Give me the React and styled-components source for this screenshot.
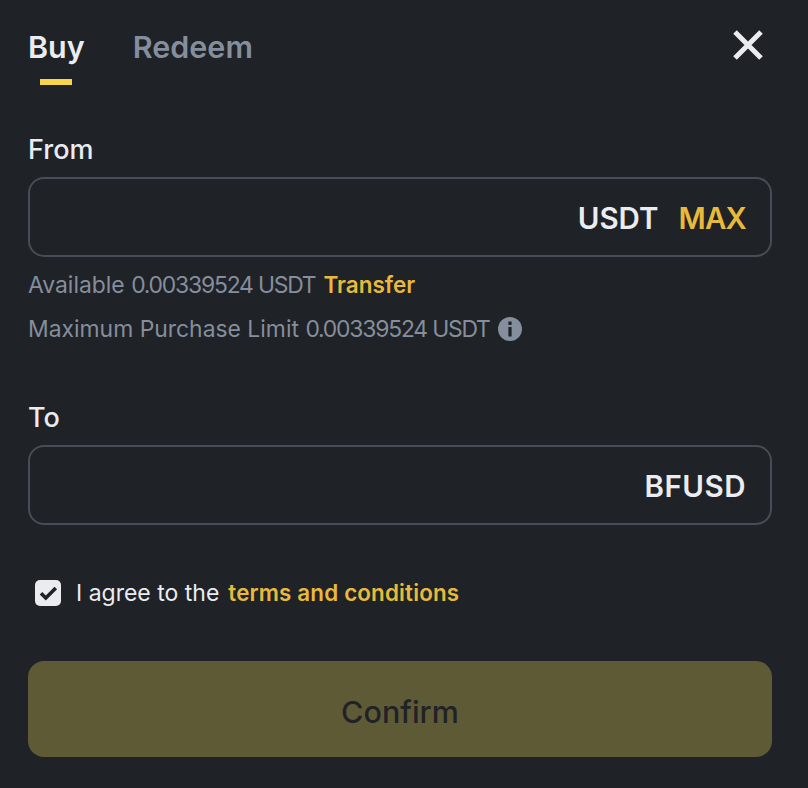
import React from "react";
import styled, { createGlobalStyle } from "styled-components";

const GlobalStyle = createGlobalStyle`
  html, body {
    margin: 0;
    background: #1f2227;
  }
  * {
    box-sizing: border-box;
  }
`;

const Panel = styled.div`
  width: 808px;
  height: 788px;
  padding: 0 36px 0 28px;
  background: #1f2227;
  font-family: "Inter", "Liberation Sans", sans-serif;
  overflow: hidden;
`;

const Header = styled.div`
  display: flex;
  justify-content: space-between;
  align-items: flex-start;
  height: 85px;
  padding-top: 26px;
`;

const Tabs = styled.div`
  display: flex;
  gap: 48px;
`;

const Tab = styled.div`
  position: relative;
  height: 59px;
  font-size: 30.5px;
  line-height: 42px;
  font-weight: 600;
  color: ${(p) => (p.$active ? "#eaecef" : "#848e9c")};
  &::after {
    content: "";
    display: ${(p) => (p.$active ? "block" : "none")};
    position: absolute;
    left: 12px;
    bottom: 0;
    width: 32px;
    height: 6px;
    background: #f8d44c;
  }
`;

const CloseIcon = styled.svg`
  display: block;
  width: 32px;
  height: 32px;
  margin-top: 3px;
  margin-right: 8px;
`;

const Label = styled.div`
  margin-top: ${(p) => p.$top}px;
  height: 32px;
  font-size: 27px;
  line-height: 32px;
  font-weight: 500;
  color: #eaecef;
`;

const Field = styled.div`
  display: flex;
  justify-content: flex-end;
  align-items: center;
  gap: 20px;
  width: 744px;
  height: 80px;
  margin-top: 11px;
  padding: 2px 24px 0;
  border: 2px solid #474d57;
  border-radius: 16px;
  font-size: 29.5px;
  font-weight: 600;
  color: #eaecef;
`;

const Unit = styled.span`
  letter-spacing: ${(p) => p.$spacing || 0}px;
`;

const Max = styled.span`
  letter-spacing: -0.8px;
  color: #e8ba3c;
`;

const Hint = styled.div`
  display: flex;
  align-items: center;
  gap: 8px;
  height: 32px;
  margin-top: ${(p) => p.$top}px;
  font-size: 22.9px;
  line-height: 32px;
  color: #848e9c;
`;

const Amount = styled.span`
  letter-spacing: -1.2px;
`;

const Link = styled.span`
  font-size: 22.5px;
  font-weight: 600;
  color: #e8ba3c;
`;

const InfoIcon = styled.svg`
  display: block;
  width: 24px;
  height: 24px;
`;

const Agree = styled.div`
  display: flex;
  align-items: center;
  height: 32px;
  margin-top: 52px;
  padding-left: 7px;
  font-size: 23px;
  line-height: 32px;
  color: #eaecef;
`;

const Checkbox = styled.svg`
  display: block;
  width: 26px;
  height: 26px;
  margin-right: 15px;
`;

const AgreeLink = styled(Link)`
  margin-left: 9px;
  font-size: 22.4px;
  letter-spacing: 0.15px;
`;

const Confirm = styled.button`
  display: block;
  width: 744px;
  height: 96px;
  margin-top: 52px;
  padding: 4px 0 0;
  border: none;
  border-radius: 16px;
  background: #5f5a36;
  color: #1f2227;
  font-family: inherit;
  font-size: 30.5px;
  font-weight: 500;
`;

export default function App() {
  return (
    <Panel>
      <GlobalStyle />
      <Header>
        <Tabs>
          <Tab $active>Buy</Tab>
          <Tab>Redeem</Tab>
        </Tabs>
        <CloseIcon viewBox="0 0 32 32">
          <path
            d="M3 3 L29 29 M29 3 L3 29"
            stroke="#eaecef"
            strokeWidth="5"
            fill="none"
          />
        </CloseIcon>
      </Header>
      <Label $top={49}>From</Label>
      <Field>
        <Unit>USDT</Unit>
        <Max>MAX</Max>
      </Field>
      <Hint $top={12}>
        <span>
          Available <Amount>0.00339524 USDT</Amount>
        </span>
        <Link>Transfer</Link>
      </Hint>
      <Hint $top={12}>
        <span>
          Maximum Purchase Limit <Amount>0.00339524 USDT</Amount>
        </span>
        <InfoIcon viewBox="0 0 24 24">
          <circle cx="12" cy="12" r="12" fill="#848e9c" />
          <rect x="10.4" y="4.5" width="3.2" height="3.4" fill="#1f2227" />
          <rect x="10.4" y="10" width="3.2" height="9.5" fill="#1f2227" />
        </InfoIcon>
      </Hint>
      <Label $top={57}>To</Label>
      <Field>
        <Unit $spacing={0.5}>BFUSD</Unit>
      </Field>
      <Agree>
        <Checkbox viewBox="0 0 26 26">
          <rect width="26" height="26" rx="5" fill="#eaecef" />
          <path
            d="M6 13.2 L10.8 18 L20.8 8"
            stroke="#1f2227"
            strokeWidth="3.6"
            fill="none"
          />
        </Checkbox>
        <span>I agree to the</span>
        <AgreeLink>terms and conditions</AgreeLink>
      </Agree>
      <Confirm>Confirm</Confirm>
    </Panel>
  );
}
